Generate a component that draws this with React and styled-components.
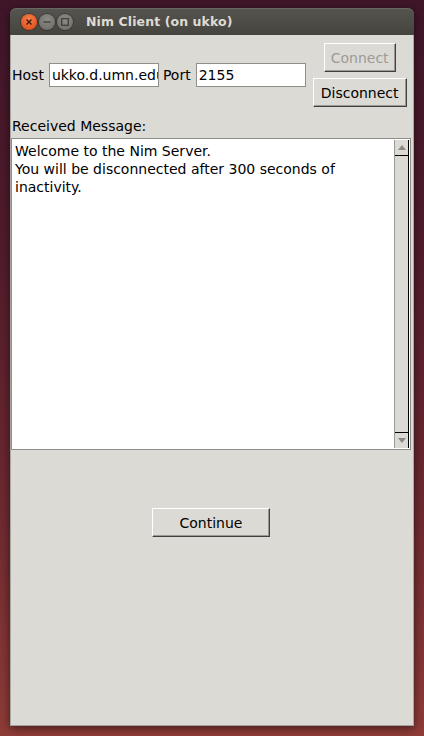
import React from "react";
import styled, { createGlobalStyle } from "styled-components";

const Global = createGlobalStyle`
  html, body { margin: 0; padding: 0; }
  body {
    width: 424px;
    height: 736px;
    overflow: hidden;
    background: linear-gradient(180deg, #3f1629 0%, #521c2c 35%, #6e2a31 70%, #8f3c37 100%);
    font-family: "DejaVu Sans", "Liberation Sans", sans-serif;
  }
`;

const Desktop = styled.div`
  padding: 8px 10px 10px 10px;
  height: 736px;
  box-sizing: border-box;
`;

const Window = styled.div`
  width: 404px;
  height: 718px;
  display: flex;
  flex-direction: column;
  box-shadow: 0 2px 10px rgba(0, 0, 0, 0.55);
  border-radius: 6px 6px 0 0;
`;

const TitleBar = styled.div`
  height: 27px;
  flex: none;
  display: flex;
  align-items: center;
  padding-left: 11px;
  border-radius: 6px 6px 0 0;
  background: linear-gradient(180deg, #55544f 0%, #45443f 100%);
  box-shadow: inset 0 1px 0 rgba(255, 255, 255, 0.12);
`;

const WinButtons = styled.div`
  display: flex;
  gap: 2px;
  margin-right: 13px;
`;

const WinBtn = styled.div`
  width: 16px;
  height: 16px;
  border-radius: 50%;
  display: flex;
  align-items: center;
  justify-content: center;
  background: ${(p) =>
    p.$close
      ? "radial-gradient(circle at 50% 35%, #f6814f 0%, #e2541f 70%, #c0411a 100%)"
      : "radial-gradient(circle at 50% 35%, #8c8b85 0%, #73726d 70%, #5f5e59 100%)"};
  box-shadow: 0 0 0 1px rgba(0, 0, 0, 0.25);
`;

const Title = styled.div`
  color: #dfdbd2;
  font-family: "DejaVu Sans", sans-serif;
  font-weight: bold;
  font-size: 12.5px;
  letter-spacing: 0.1px;
`;

const Body = styled.div`
  flex: 1;
  background: #dcdad5;
  border-left: 1px solid #a8a7a2;
  border-right: 1px solid #a8a7a2;
  border-bottom: 1px solid #a1a09b;
  padding: 8px 2px 0 0;
  display: flex;
  flex-direction: column;
  color: #000;
  font-size: 14px;
`;

const TopRow = styled.div`
  display: flex;
  align-items: center;
  padding-left: 1px;
`;

const Field = styled.div`
  display: flex;
  align-items: center;
  gap: 5px;
  margin-right: 4px;
`;

const Label = styled.span`
  font-size: 14px;
  line-height: 18px;
`;

const Entry = styled.div`
  height: 22px;
  width: 106px;
  background: #fff;
  border: 1px solid #8f8e8a;
  font-size: 14px;
  line-height: 22px;
  padding-left: 2px;
  box-sizing: content-box;
  overflow: hidden;
  white-space: nowrap;
`;

const ButtonCol = styled.div`
  margin-left: 3px;
  width: 94px;
  display: flex;
  flex-direction: column;
  align-items: center;
  gap: 6px;
`;

const Button = styled.div`
  box-sizing: border-box;
  width: ${(p) => p.$w}px;
  height: ${(p) => p.$h}px;
  display: flex;
  align-items: center;
  justify-content: center;
  background: #dcdad5;
  border: 1px solid;
  border-color: #ffffff #404040 #404040 #ffffff;
  box-shadow: inset -1px -1px 0 #9a9994;
  color: ${(p) => (p.$disabled ? "#9c9b97" : "#000")};
  font-size: 14px;
`;

const Caption = styled.div`
  margin: 9px 0 0 1px;
  line-height: 20px;
  font-size: 14px;
`;

const MessageBox = styled.div`
  margin: 2px 0 0 0;
  height: 310px;
  border: 1px solid #8f8e8a;
  background: #fff;
  display: flex;
`;

const MessageText = styled.div`
  flex: 1;
  padding: 3px 3px 0 3px;
  font-size: 14px;
  line-height: 18px;
  white-space: pre-wrap;
`;

const Scrollbar = styled.div`
  width: 13px;
  margin: 1px 1px 1px 0;
  background: #dcdad5;
  border-left: 1px solid #9a9994;
  border-right: 1px solid #000;
  display: flex;
  flex-direction: column;
  justify-content: space-between;
`;

const Arrow = styled.div`
  height: 15px;
  display: flex;
  align-items: center;
  justify-content: center;
  border-top: ${(p) => (p.$down ? "1px solid #000" : "none")};
  border-bottom: ${(p) => (p.$down ? "none" : "1px solid #000")};
  background: #dcdad5;
`;

const Footer = styled.div`
  display: flex;
  justify-content: center;
  margin-top: 58px;
`;

export default function App() {
  return (
    <>
      <Global />
      <Desktop>
        <Window>
          <TitleBar>
            <WinButtons>
              <WinBtn $close>
                <svg width="8" height="8" viewBox="0 0 8 8">
                  <path d="M1.5 1.5L6.5 6.5M6.5 1.5L1.5 6.5" stroke="#3a1a0e" strokeWidth="1.4" />
                </svg>
              </WinBtn>
              <WinBtn>
                <svg width="8" height="8" viewBox="0 0 8 8">
                  <path d="M0.5 4H7.5" stroke="#3c3b37" strokeWidth="1.3" />
                </svg>
              </WinBtn>
              <WinBtn>
                <svg width="8" height="8" viewBox="0 0 8 8">
                  <rect x="0.7" y="0.7" width="6.6" height="6.6" fill="none" stroke="#3c3b37" strokeWidth="1.2" />
                </svg>
              </WinBtn>
            </WinButtons>
            <Title>Nim Client (on ukko)</Title>
          </TitleBar>
          <Body>
            <TopRow>
              <Field>
                <Label>Host</Label>
                <Entry>ukko.d.umn.edu</Entry>
              </Field>
              <Field>
                <Label>Port</Label>
                <Entry>2155</Entry>
              </Field>
              <ButtonCol>
                <Button $w={72} $h={29} $disabled>Connect</Button>
                <Button $w={94} $h={29}>Disconnect</Button>
              </ButtonCol>
            </TopRow>
            <Caption>Received Message:</Caption>
            <MessageBox>
              <MessageText>{"Welcome to the Nim Server.\nYou will be disconnected after 300 seconds of inactivity."}</MessageText>
              <Scrollbar>
                <Arrow>
                  <svg width="8" height="5" viewBox="0 0 8 5">
                    <path d="M0 5L4 0L8 5Z" fill="#8a8985" />
                  </svg>
                </Arrow>
                <Arrow $down>
                  <svg width="8" height="5" viewBox="0 0 8 5">
                    <path d="M0 0L8 0L4 5Z" fill="#8a8985" />
                  </svg>
                </Arrow>
              </Scrollbar>
            </MessageBox>
            <Footer>
              <Button $w={118} $h={29}>Continue</Button>
            </Footer>
          </Body>
        </Window>
      </Desktop>
    </>
  );
}
